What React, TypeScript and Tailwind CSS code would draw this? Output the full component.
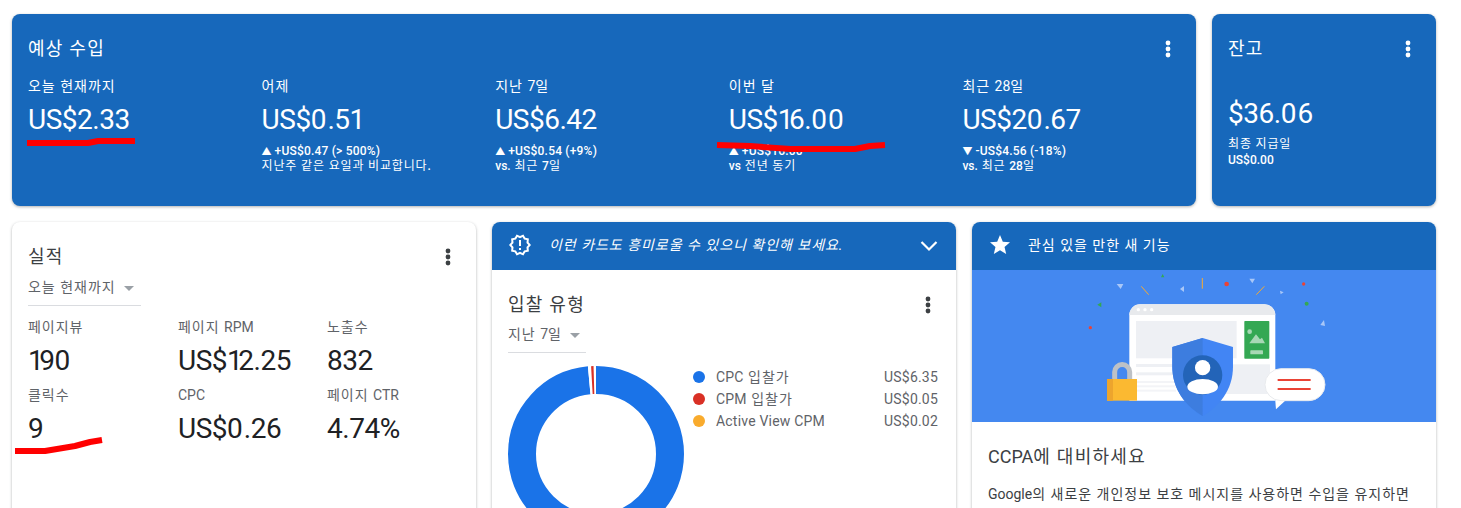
const KR = "font-['Roboto','Noto_Sans_CJK_KR',sans-serif]"

// hangul runs sit a bit wider than Noto in the capture
function Ko({ text }: { text: string }) {
  const parts = text.match(/[\uac00-\ud7a3 ]+|[^\uac00-\ud7a3 ]+/g) ?? []
  return (
    <span>
      {parts.map((p, i) =>
        /[\uac00-\ud7a3]/.test(p) ? (
          <span key={i} className="font-normal tracking-[0.07em]">{p}</span>
        ) : (
          <span key={i}>{p}</span>
        ),
      )}
    </span>
  )
}

// big figures: the capture has a narrow 1 and a round 0, Roboto's digits are all one width
function Num({ text }: { text: string }) {
  return (
    <span className="tracking-[-0.5px]">
      {text.split('').map((ch, i) => {
        if (ch === '1') return <span key={i} className="tracking-[-4.5px]">{ch}</span>
        if (ch === '0') return <span key={i} className="tracking-[1px]">{ch}</span>
        return <span key={i}>{ch}</span>
      })}
    </span>
  )
}

function Kebab({ color = '#fff' }: { color?: string }) {
  return (
    <svg width="6" height="18" viewBox="0 0 6 18" fill={color}>
      <circle cx="3" cy="3" r="2.4" />
      <circle cx="3" cy="9" r="2.4" />
      <circle cx="3" cy="15" r="2.4" />
    </svg>
  )
}

function Caret() {
  return <span className="ml-2 mt-0.5 inline-block h-0 w-0 border-x-[5px] border-t-[5px] border-x-transparent border-t-[#9aa0a6]" />
}

const earnings = [
  { label: '오늘 현재까지', value: 'US$2.33' },
  { label: '어제', value: 'US$0.51', arrow: '▲', delta: '+US$0.47 (> 500%)', note: '지난주 같은 요일과 비교합니다.' },
  { label: '지난 7일', value: 'US$6.42', arrow: '▲', delta: '+US$0.54 (+9%)', note: 'vs. 최근 7일' },
  { label: '이번 달', value: 'US$16.00', arrow: '▲', delta: '+US$16.00', note: 'vs 전년 동기' },
  { label: '최근 28일', value: 'US$20.67', arrow: '▼', delta: '-US$4.56 (-18%)', note: 'vs. 최근 28일' },
]

const metrics = [
  { label: '페이지뷰', value: '190' },
  { label: '페이지 RPM', value: 'US$12.25' },
  { label: '노출수', value: '832' },
  { label: '클릭수', value: '9' },
  { label: 'CPC', value: 'US$0.26' },
  { label: '페이지 CTR', value: '4.74%' },
]

const legend = [
  { color: 'bg-[#1a73e8]', label: 'CPC 입찰가', value: 'US$6.35' },
  { color: 'bg-[#d93025]', label: 'CPM 입찰가', value: 'US$0.05' },
  { color: 'bg-[#f9ab2d]', label: 'Active View CPM', value: 'US$0.02' },
]

function Donut() {
  const r = 74
  const c = 2 * Math.PI * r
  return (
    <svg width="176" height="176" viewBox="0 0 176 176" className="shrink-0">
      <g transform="rotate(-90 88 88)" fill="none" strokeWidth="28">
        <circle cx="88" cy="88" r={r} stroke="#1a73e8" strokeDasharray={`${c * 0.9835} ${c}`} />
        <circle cx="88" cy="88" r={r} stroke="#fff" strokeDasharray={`${c * 0.0165} ${c}`} strokeDashoffset={-c * 0.9835} />
        <circle cx="88" cy="88" r={r} stroke="#d93025" strokeDasharray={`${c * 0.0045} ${c}`} strokeDashoffset={-c * 0.9893} />
      </g>
    </svg>
  )
}

function Illustration() {
  return (
    <svg width="464" height="152" viewBox="0 0 464 152" className="block">
      <g transform="translate(98 0) scale(0.3333)">
        {/* confetti */}
        <polygon points="140,42 160,42 152,57" fill="#a9c7f7" />
        <polygon points="342,48 342,66 330,57" fill="#a9c7f7" />
        <polygon points="538,26 555,26 547,40" fill="#a9c7f7" />
        <polygon points="630,62 641,67 632,73" fill="#a9c7f7" />
        <polygon points="762,150 765,168 751,165" fill="#a9c7f7" />
        <polygon points="273,22 283,22 278,12" fill="#34a853" />
        <polygon points="82,104 94,97 94,112" fill="#34a853" />
        <circle cx="710" cy="101" r="6" fill="#34a853" />
        <circle cx="470" cy="42" r="7" fill="#ea4335" />
        <circle cx="701" cy="42" r="5" fill="#ea4335" />
        <circle cx="61" cy="173" r="5" fill="#ea4335" />
        <path d="M214 49 L236 74 M397 24 V56 M559 74 L583 49" stroke="#f9ab2d" strokeWidth="3" fill="none" />
        {/* browser */}
        <path d="M178 135 a32 32 0 0 1 32 -32 H584 a32 32 0 0 1 32 32 V392 H178 Z" fill="#fff" />
        <path d="M178 135 a32 32 0 0 1 32 -32 H584 a32 32 0 0 1 32 32 Z" fill="#e8eaed" />
        <circle cx="205" cy="119" r="5" fill="#fff" />
        <circle cx="225" cy="119" r="5" fill="#fff" />
        <circle cx="245" cy="119" r="5" fill="#fff" />
        <rect x="198" y="153" width="302" height="112" fill="#eef0f4" />
        <rect x="523" y="153" width="75" height="113" rx="2" fill="#34a853" />
        <circle cx="539" cy="185" r="7" fill="#a8d8b5" />
        <polygon points="538,220 558,193 570,208 576,203 585,220" fill="#a8d8b5" />
        <rect x="541" y="241" width="38" height="12" rx="2" fill="#a8d8b5" />
        <rect x="198" y="282" width="120" height="9" fill="#eef0f4" />
        <rect x="198" y="307" width="120" height="9" fill="#eef0f4" />
        <rect x="198" y="333" width="120" height="6" fill="#f3f4f7" />
        <rect x="198" y="346" width="120" height="6" fill="#f3f4f7" />
        <rect x="198" y="359" width="120" height="6" fill="#f3f4f7" />
        <rect x="460" y="283" width="140" height="89" fill="#eef0f4" />
        {/* lock */}
        <path d="M134 330 V306 a22.5 22.5 0 0 1 45 0 V330" stroke="#bdc1c6" strokeWidth="15" fill="none" />
        <rect x="111" y="327" width="90" height="65" fill="#fbb931" />
        <rect x="111" y="327" width="18" height="65" fill="#eda52d" />
        {/* shield */}
        <path d="M398 204 L489 231 V290 C489 360 446 410 398 438 C350 410 307 360 307 290 V231 Z" fill="#4285f4" />
        <path d="M398 204 L307 231 V290 C307 360 350 410 398 438 Z" fill="#3d7ddf" />
        <circle cx="398" cy="315" r="59" fill="#2364b8" />
        <circle cx="398" cy="293" r="23" fill="#fff" />
        <ellipse cx="398" cy="350" rx="46" ry="23" fill="#fff" />
        {/* bubble */}
        <polygon points="615,380 618,418 648,390" fill="#fff" />
        <rect x="585" y="296" width="180" height="96" rx="48" fill="#fff" stroke="#e8eaed" strokeWidth="3" />
        <path d="M623 330 H722 M623 357 H722" stroke="#ea4335" strokeWidth="6" />
      </g>
    </svg>
  )
}

export default function App() {
  return (
    <div className={`relative flex h-[508px] w-[1461px] flex-col gap-4 overflow-hidden bg-white pl-3 pt-3.5 ${KR}`}>
      <div className="flex shrink-0 gap-4">
        <section className="h-[192px] w-[1184px] rounded-lg bg-[#1768bb] pl-4 pt-[23px] text-white shadow-[0_1px_3px_rgba(60,64,67,0.4)]">
          <div className="flex items-center justify-between pr-[25px]">
            <h2 className="text-lg leading-6"><Ko text="예상 수입" /></h2>
            <Kebab />
          </div>
          <div className="mt-[15px] grid grid-cols-5">
            {earnings.map(e => (
              <div key={e.label}>
                <div className="text-sm leading-5"><Ko text={e.label} /></div>
                <div className="mt-[6px] text-[28px] leading-9"><Num text={e.value} /></div>
                {e.arrow && (
                  <div className="mt-[6px] text-xs font-medium leading-[15px]">
                    <div className="flex items-center tracking-[0.2px]">
                      <span className="w-[13px] text-[10px]">{e.arrow}</span>
                      <span>{e.delta}</span>
                    </div>
                    <div><Ko text={e.note} /></div>
                  </div>
                )}
              </div>
            ))}
          </div>
        </section>

        <section className="h-[192px] w-[224px] rounded-lg bg-[#1768bb] pl-4 pt-[23px] text-white shadow-[0_1px_3px_rgba(60,64,67,0.4)]">
          <div className="flex items-center justify-between pr-[25px]">
            <h2 className="text-lg leading-6"><Ko text="잔고" /></h2>
            <Kebab />
          </div>
          <div className="mt-[35px] text-[28px] leading-9"><Num text="$36.06" /></div>
          <div className="mt-1 text-xs font-medium leading-4"><Ko text="최종 지급일" /></div>
          <div className="text-xs font-medium leading-4">US$0.00</div>
        </section>
      </div>

      <div className="grid w-[1424px] shrink-0 grid-cols-3 gap-4">
        <section className="h-[400px] rounded-lg bg-white pl-4 pt-[23px] shadow-[0_1px_3px_rgba(60,64,67,0.4)]">
          <div className="flex items-center justify-between pr-[25px]">
            <h2 className="text-lg leading-6 text-[#3c4043]"><Ko text="실적" /></h2>
            <Kebab color="#3c4043" />
          </div>
          <div className="mt-[5px] flex h-[26px] w-[113px] items-center whitespace-nowrap text-sm leading-5 text-[#5f6368]">
            <Ko text="오늘 현재까지" />
            <Caret />
          </div>
          <div className="mt-[5px] h-px w-[113px] bg-[#dadce0]" />
          <div className="mt-[11px] grid grid-cols-[150px_149px_1fr] gap-y-[6px]">
            {metrics.map(m => (
              <div key={m.label}>
                <div className="text-sm leading-5 text-[#5f6368]"><Ko text={m.label} /></div>
                <div className="mt-[6px] text-[28px] leading-9 text-[#202124]"><Num text={m.value} /></div>
              </div>
            ))}
          </div>
        </section>

        <section className="h-[400px] overflow-hidden rounded-lg bg-white shadow-[0_1px_3px_rgba(60,64,67,0.4)]">
          <div className="flex h-12 items-center bg-[#1768bb] pb-0.5 pl-4 pr-[18px] text-white">
            <svg width="24" height="24" viewBox="0 0 24 24" fill="#fff" className="shrink-0">
              <path d="M23 12l-2.44-2.78.34-3.68-3.61-.82-1.89-3.18L12 3 8.6 1.54 6.71 4.72l-3.61.81.34 3.68L1 12l2.44 2.78-.34 3.69 3.61.82 1.89 3.18L12 21l3.4 1.46 1.89-3.18 3.61-.82-.34-3.68L23 12zm-4.51 2.11l.26 2.79-2.74.62-1.43 2.41L12 18.82l-2.58 1.11-1.43-2.41-2.74-.62.26-2.8L3.66 12l1.85-2.12-.26-2.78 2.74-.61 1.43-2.41L12 5.18l2.58-1.11 1.43 2.41 2.74.62-.26 2.79L20.34 12l-1.85 2.11zM11 15h2v2h-2zm0-8h2v6h-2z" />
            </svg>
            <span className="ml-[17px] flex-1 text-sm italic"><Ko text="이런 카드도 흥미로울 수 있으니 확인해 보세요." /></span>
            <svg width="18" height="12" viewBox="0 0 18 12" fill="none" stroke="#fff" strokeWidth="2.2" className="mt-0.5">
              <path d="M1.5 2 L9 9.5 L16.5 2" />
            </svg>
          </div>
          <div className="pl-4 pt-[23px]">
            <div className="flex items-center justify-between pr-[25px]">
              <h2 className="text-lg leading-6 text-[#3c4043]"><Ko text="입찰 유형" /></h2>
              <Kebab color="#3c4043" />
            </div>
            <div className="mt-[4px] flex h-[26px] items-center text-sm leading-5 text-[#5f6368]">
              <Ko text="지난 7일" />
              <Caret />
            </div>
            <div className="mt-[5px] h-px w-[78px] bg-[#dadce0]" />
            <div className="mt-[13px] flex">
              <Donut />
              <ul className="ml-[9px] flex-1 pr-[18px]">
                {legend.map(l => (
                  <li key={l.label} className="flex h-[22px] items-center text-sm tracking-[0.2px] text-[#5f6368]">
                    <span className={`h-3 w-3 rounded-full ${l.color}`} />
                    <span className="ml-[11px] flex-1"><Ko text={l.label} /></span>
                    <span>{l.value}</span>
                  </li>
                ))}
              </ul>
            </div>
          </div>
        </section>

        <section className="h-[400px] overflow-hidden rounded-lg bg-white shadow-[0_1px_3px_rgba(60,64,67,0.4)]">
          <div className="flex h-12 items-center bg-[#1768bb] pb-0.5 pl-4 text-white">
            <svg width="24" height="24" viewBox="0 0 24 24" fill="#fff" className="shrink-0">
              <path d="M12 17.27L18.18 21l-1.64-7.03L22 9.24l-7.19-.61L12 2 9.19 8.63 2 9.24l5.46 4.73L5.82 21z" />
            </svg>
            <span className="ml-4 text-sm"><Ko text="관심 있을 만한 새 기능" /></span>
          </div>
          <div className="bg-[#4488f0]">
            <Illustration />
          </div>
          <div className="px-4 pt-[21px]">
            <h3 className="text-lg leading-7 text-[#3c4043]"><Ko text="CCPA에 대비하세요" /></h3>
            <p className="mt-[13px] whitespace-nowrap text-sm leading-5 text-[#3c4043]">
              <Ko text="Google의 새로운 개인정보 보호 메시지를 사용하면 수입을 유지하면" />
            </p>
          </div>
        </section>
      </div>

      {/* red marker strokes drawn over the capture */}
      <svg width="1461" height="508" viewBox="0 0 1461 508" fill="none" stroke="#ff0000" strokeWidth="6" strokeLinejoin="round" className="pointer-events-none absolute left-0 top-0">
        <path d="M27 143 L88 143 L98 141 L135 141" />
        <path d="M717 145 L750 146 L790 149 L855 149 L870 146 L885 145" />
        <path d="M15 451 L45 451 L75 446 L90 442 L102 440" />
      </svg>
    </div>
  )
}
